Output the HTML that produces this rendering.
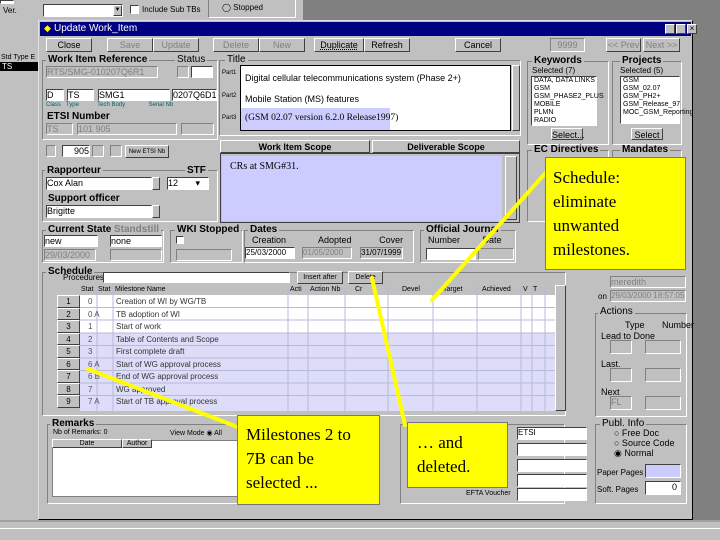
<!DOCTYPE html><html><head><style>
body{margin:0;width:720px;height:540px;overflow:hidden;background:#808080;position:relative;font-family:"Liberation Sans",sans-serif;font-size:9px;color:#000}
div,span{position:absolute;box-sizing:border-box}
.g{background:#c0c0c0}
.b{background:#c0c0c0;border:1px solid;border-color:#fff #404040 #404040 #fff;text-align:center;line-height:12px}
.i{background:#fff;border:1px solid;border-color:#404040 #fff #fff #404040}
.ig{background:#c0c0c0;border:1px solid;border-color:#808080 #fff #fff #808080}
.gr{border:1px solid;border-color:#808080 #fff #fff #808080}
.l{background:#c0c0c0;padding:0 2px;font-weight:bold;font-size:10px;line-height:10px}
.y{background:#ffff00;border:1px solid #777;font-family:"Liberation Serif",serif;font-size:17px;line-height:24px;padding:4px 8px}
.dis{color:#808080}
</style></head><body>
<div class="g" style="left:0;top:0;width:303px;height:22px"></div>
<div class="i" style="left:0;top:0;width:14px;height:4px"></div>
<span style="left:3px;top:6px;font-size:8px">Ver.</span>
<div class="i" style="left:43px;top:4px;width:80px;height:13px"></div>
<div class="b" style="left:113px;top:5px;width:9px;height:11px;font-size:6px;line-height:9px">▼</div>
<div class="i" style="left:130px;top:5px;width:9px;height:9px"></div>
<span style="left:142px;top:5px;font-size:8px">Include Sub TBs</span>
<div class="gr" style="left:208px;top:-2px;width:88px;height:20px"></div>
<span style="left:222px;top:3px;font-size:8px">◯ Stopped</span>
<div class="g" style="left:0;top:22px;width:40px;height:500px"></div>
<span style="left:1px;top:54px;font-size:7px">Std Type E</span>
<div style="left:0;top:62px;width:38px;height:9px;background:#000"></div>
<span style="left:2px;top:62px;color:#fff;font-size:8px">TS</span>
<div class="g" style="left:0;top:520px;width:720px;height:20px;border-top:2px solid #a0a0a0"></div>
<div style="left:0;top:528px;width:720px;height:1px;background:#fff"></div>
<!-- window -->
<div class="g" style="left:38px;top:20px;width:655px;height:500px;border:1px solid;border-color:#dfdfdf #000 #000 #dfdfdf"></div>
<div style="left:40px;top:22px;width:651px;height:14px;background:#000080"></div>
<span style="left:44px;top:23px;color:#ff0;font-size:9px">◆</span>
<span style="left:54px;top:23px;color:#fff;font-size:10px">Update Work_Item</span>
<div class="b" style="left:665px;top:24px;width:10px;height:10px"></div>
<div class="b" style="left:676px;top:24px;width:10px;height:10px"></div>
<div class="b" style="left:687px;top:24px;width:10px;height:10px;font-size:8px;line-height:8px">×</div>
<!-- toolbar -->
<div class="b" style="left:46px;top:38px;width:46px;height:14px">Close</div>
<div class="b dis" style="left:107px;top:38px;width:46px;height:14px">Save</div>
<div class="b dis" style="left:153px;top:38px;width:46px;height:14px">Update</div>
<div class="b dis" style="left:213px;top:38px;width:46px;height:14px">Delete</div>
<div class="b dis" style="left:259px;top:38px;width:46px;height:14px">New</div>
<div class="b" style="left:314px;top:38px;width:50px;height:14px;text-decoration:underline dotted">Duplicate</div>
<div class="b" style="left:364px;top:38px;width:46px;height:14px">Refresh</div>
<div class="b" style="left:455px;top:38px;width:46px;height:14px">Cancel</div>
<div class="ig dis" style="left:550px;top:38px;width:35px;height:14px;text-align:center;line-height:12px">9999</div>
<div class="b dis" style="left:606px;top:38px;width:35px;height:14px">&lt;&lt; Prev</div>
<div class="b dis" style="left:643px;top:38px;width:37px;height:14px">Next &gt;&gt;</div>
<!-- work item ref -->
<div class="gr" style="left:42px;top:60px;width:176px;height:80px"></div>
<span class="l" style="left:46px;top:55px">Work Item Reference</span>
<span class="l" style="left:175px;top:55px;font-weight:normal">Status</span>
<div class="ig" style="left:46px;top:66px;width:112px;height:12px;color:#808080">RTS/SMG-010207Q6R1</div>
<div class="ig" style="left:177px;top:66px;width:12px;height:12px"></div>
<div class="i" style="left:191px;top:66px;width:22px;height:12px"></div>
<div class="i" style="left:46px;top:89px;width:18px;height:12px">D</div>
<div class="i" style="left:67px;top:89px;width:27px;height:12px">TS</div>
<div class="i" style="left:98px;top:89px;width:72px;height:12px">SMG1</div>
<div class="i" style="left:172px;top:89px;width:45px;height:12px">0207Q6D1</div>
<span style="left:46px;top:102px;font-size:6px;color:#066">Class &nbsp; Type &nbsp;&nbsp;&nbsp;&nbsp;&nbsp;&nbsp;&nbsp;&nbsp;&nbsp; Tech Body &nbsp;&nbsp;&nbsp;&nbsp;&nbsp;&nbsp;&nbsp;&nbsp;&nbsp;&nbsp;&nbsp;&nbsp; Serial Nb</span>
<span class="l" style="left:45px;top:112px">ETSI Number</span>
<div class="ig" style="left:46px;top:123px;width:27px;height:12px;color:#808080">TS</div>
<div class="ig" style="left:77px;top:123px;width:100px;height:12px;color:#808080">101 905</div>
<div class="ig" style="left:181px;top:123px;width:33px;height:12px"></div>
<div class="ig" style="left:46px;top:145px;width:10px;height:12px"></div>
<div class="i" style="left:62px;top:145px;width:28px;height:12px;text-align:right">905</div>
<div class="ig" style="left:92px;top:145px;width:12px;height:12px"></div>
<div class="ig" style="left:110px;top:145px;width:12px;height:12px"></div>
<div class="b" style="left:125px;top:145px;width:44px;height:13px;font-size:6px">New ETSI Nb</div>
<div class="gr" style="left:42px;top:170px;width:176px;height:52px"></div>
<span class="l" style="left:45px;top:166px">Rapporteur</span>
<span class="l" style="left:185px;top:166px">STF</span>
<div class="i" style="left:46px;top:177px;width:106px;height:13px">Cox Alan</div>
<div class="b" style="left:152px;top:177px;width:8px;height:13px"></div>
<div class="i" style="left:167px;top:177px;width:42px;height:13px">12 &nbsp;&nbsp;&nbsp;&nbsp;&nbsp; ▾</div>
<span class="l" style="left:46px;top:194px">Support officer</span>
<div class="i" style="left:46px;top:205px;width:106px;height:13px">Brigitte</div>
<div class="b" style="left:152px;top:205px;width:8px;height:13px"></div>
<!-- title -->
<div class="gr" style="left:219px;top:60px;width:302px;height:76px"></div>
<span class="l" style="left:225px;top:55px;font-weight:normal">Title</span>
<span style="left:222px;top:70px;font-size:6px">Part1</span><span style="left:222px;top:93px;font-size:6px">Part2</span><span style="left:222px;top:115px;font-size:6px">Part3</span>
<div style="left:240px;top:65px;width:271px;height:66px;background:#fff;border:1px solid #000"></div>
<span style="left:245px;top:73px;font-size:9px">Digital cellular telecommunications system (Phase 2+)</span>
<span style="left:245px;top:94px;font-size:9px">Mobile Station (MS) features</span>
<div style="left:241px;top:108px;width:149px;height:22px;background:#ccccff"></div>
<span style="left:245px;top:113px;font-family:'Liberation Serif',serif;font-size:9.5px">(GSM 02.07 version 6.2.0 Release1997)</span>
<div class="b" style="left:512px;top:65px;width:8px;height:66px"></div>
<!-- tabs -->
<div class="b" style="left:220px;top:140px;width:150px;height:13px;font-weight:bold">Work Item Scope</div>
<div class="b" style="left:372px;top:140px;width:148px;height:13px;font-weight:bold">Deliverable Scope</div>
<div style="left:220px;top:153px;width:300px;height:70px;border:1px solid #404040;background:#c0c0c0"></div>
<div style="left:222px;top:156px;width:280px;height:65px;background:#ccccff"></div>
<span style="left:230px;top:161px;font-family:'Liberation Serif',serif;font-size:10px">CRs at SMG#31.</span>
<div class="b" style="left:505px;top:156px;width:12px;height:64px"></div>
<!-- keywords -->
<div class="gr" style="left:527px;top:61px;width:82px;height:84px"></div>
<span class="l" style="left:532px;top:56px">Keywords</span>
<span style="left:532px;top:66px;font-size:8px">Selected (7)</span>
<div class="i" style="left:531px;top:76px;width:66px;height:50px;font-size:7px;line-height:8px;padding-left:2px">DATA, DATA LINKS<br>GSM<br>GSM_PHASE2_PLUS<br>MOBILE<br>PLMN<br>RADIO</div>
<div class="b" style="left:551px;top:128px;width:32px;height:12px">Select...</div>
<div class="gr" style="left:612px;top:61px;width:70px;height:84px"></div>
<span class="l" style="left:620px;top:56px">Projects</span>
<span style="left:620px;top:66px;font-size:8px">Selected (5)</span>
<div class="i" style="left:620px;top:76px;width:60px;height:48px;font-size:7px;line-height:8px;padding-left:2px">GSM<br>GSM_02.07<br>GSM_PH2+<br>GSM_Release_97<br>MOC_GSM_Reporting</div>
<div class="b" style="left:631px;top:128px;width:32px;height:12px">Select</div>
<div class="gr" style="left:527px;top:150px;width:82px;height:72px"></div>
<span class="l" style="left:532px;top:145px">EC Directives</span>
<div class="gr" style="left:612px;top:150px;width:70px;height:72px"></div>
<span class="l" style="left:620px;top:145px">Mandates</span>
<!-- current state row -->
<div class="gr" style="left:42px;top:230px;width:122px;height:33px"></div>
<span class="l" style="left:46px;top:225px">Current State</span>
<span class="l" style="left:112px;top:225px;color:#808080">Standstill</span>
<div class="i" style="left:44px;top:235px;width:54px;height:12px">new</div>
<div class="ig" style="left:44px;top:249px;width:52px;height:12px;color:#808080">29/03/2000</div>
<div class="i" style="left:110px;top:235px;width:52px;height:12px">none</div>
<div class="ig" style="left:110px;top:249px;width:52px;height:12px"></div>
<div class="gr" style="left:170px;top:230px;width:73px;height:33px"></div>
<span class="l" style="left:175px;top:225px">WKI Stopped</span>
<div class="i" style="left:176px;top:236px;width:8px;height:8px"></div>
<div class="ig" style="left:176px;top:249px;width:56px;height:12px"></div>
<div class="gr" style="left:244px;top:230px;width:170px;height:33px"></div>
<span class="l" style="left:248px;top:225px">Dates</span>
<span style="left:252px;top:235px">Creation &nbsp;&nbsp;&nbsp;&nbsp;&nbsp;&nbsp;&nbsp;&nbsp;&nbsp;&nbsp;&nbsp; Adopted &nbsp;&nbsp;&nbsp;&nbsp;&nbsp;&nbsp;&nbsp;&nbsp;&nbsp; Cover</span>
<div class="i" style="left:245px;top:247px;width:50px;height:12px;font-size:8px">25/03/2000</div>
<div class="ig" style="left:302px;top:247px;width:50px;height:12px;font-size:8px;color:#808080">01/05/2000</div>
<div class="ig" style="left:360px;top:247px;width:43px;height:12px;font-size:8px">31/07/1999</div>
<div class="gr" style="left:420px;top:230px;width:96px;height:33px"></div>
<span class="l" style="left:424px;top:225px">Official Journal</span>
<span style="left:428px;top:235px">Number &nbsp;&nbsp;&nbsp;&nbsp;&nbsp;&nbsp;&nbsp; Date</span>
<div class="i" style="left:426px;top:248px;width:50px;height:12px"></div>
<div class="ig" style="left:478px;top:248px;width:36px;height:12px"></div>
<!-- schedule -->
<div class="gr" style="left:42px;top:272px;width:524px;height:144px"></div>
<span class="l" style="left:46px;top:267px">Schedule</span>
<span style="left:63px;top:273px;font-size:8px">Procedures</span>
<div class="i" style="left:103px;top:272px;width:187px;height:11px"></div>
<div class="b" style="left:297px;top:271px;width:46px;height:13px;font-size:7px">Insert after</div>
<div class="b" style="left:348px;top:271px;width:35px;height:13px;font-size:7px">Delete</div>
<div style="left:57px;top:285px;width:498px;height:10px;background:#c0c0c0;font-size:7px;line-height:10px;white-space:nowrap">
<span style="left:24px">Stat</span><span style="left:41px">Stat</span><span style="left:58px">Milestone Name</span><span style="left:233px">Acti</span><span style="left:253px">Action Nb</span><span style="left:298px">Cr</span><span style="left:345px">Devel</span><span style="left:386px">Target</span><span style="left:425px">Achieved</span><span style="left:466px">V</span><span style="left:476px">T</span></div>
<div style="left:80px;top:295px;width:475px;height:38px;background:#fff"></div>
<div style="left:80px;top:333px;width:475px;height:78px;background:#ddddfa"></div>
<svg style="position:absolute;left:0;top:0" width="720" height="540">
<g stroke="#b8b8d8" stroke-width="1">
<line x1="80" y1="307.5" x2="555" y2="307.5"/><line x1="80" y1="320" x2="555" y2="320"/><line x1="80" y1="333" x2="555" y2="333"/><line x1="80" y1="345.5" x2="555" y2="345.5"/><line x1="80" y1="358" x2="555" y2="358"/><line x1="80" y1="370.5" x2="555" y2="370.5"/><line x1="80" y1="383" x2="555" y2="383"/><line x1="80" y1="395.5" x2="555" y2="395.5"/>
<line x1="97" y1="285" x2="97" y2="411"/><line x1="113" y1="285" x2="113" y2="411"/><line x1="288" y1="285" x2="288" y2="411"/><line x1="308" y1="285" x2="308" y2="411"/><line x1="345" y1="285" x2="345" y2="411"/><line x1="388" y1="285" x2="388" y2="411"/><line x1="433" y1="285" x2="433" y2="411"/><line x1="477" y1="285" x2="477" y2="411"/><line x1="521" y1="285" x2="521" y2="411"/><line x1="532" y1="285" x2="532" y2="411"/><line x1="545" y1="285" x2="545" y2="411"/>
</g></svg>
<div style="left:57px;top:295px;width:23px;height:116px;font-size:8px;text-align:center;line-height:12.5px">
<div class="b" style="position:static;height:12.5px;line-height:11px">1</div><div class="b" style="position:static;height:12.5px;line-height:11px">2</div><div class="b" style="position:static;height:12.5px;line-height:11px">3</div><div class="b" style="position:static;height:12.5px;line-height:11px">4</div><div class="b" style="position:static;height:12.5px;line-height:11px">5</div><div class="b" style="position:static;height:12.5px;line-height:11px">6</div><div class="b" style="position:static;height:12.5px;line-height:11px">7</div><div class="b" style="position:static;height:12.5px;line-height:11px">8</div><div class="b" style="position:static;height:12.5px;line-height:11px">9</div></div>
<div style="left:88px;top:296px;width:30px;font-size:8px;line-height:12.5px;color:#555">0<br>0 A<br>1<br>2<br>3<br>6 A<br>6 B<br>7<br>7 A</div>
<div style="left:116px;top:296px;width:180px;font-size:8px;line-height:12.5px;color:#333;white-space:nowrap">Creation of WI by WG/TB<br>TB adoption of WI<br>Start of work<br>Table of Contents and Scope<br>First complete draft<br>Start of WG approval process<br>End of WG approval process<br>WG approved<br>Start of TB approval process</div>
<div class="b" style="left:555px;top:285px;width:11px;height:126px"></div>
<!-- right panel -->
<div class="ig" style="left:610px;top:276px;width:76px;height:12px;color:#808080">meredith</div>
<span style="left:598px;top:292px;font-size:8px">on</span>
<div class="ig" style="left:610px;top:290px;width:76px;height:12px;color:#808080;font-size:8px">29/03/2000 18:57:05</div>
<div class="gr" style="left:595px;top:313px;width:92px;height:104px"></div>
<span class="l" style="left:598px;top:307px;font-weight:normal">Actions</span>
<span style="left:625px;top:320px">Type &nbsp;&nbsp;&nbsp;&nbsp;&nbsp; Number</span>
<span style="left:601px;top:331px">Lead to Done</span>
<div class="ig" style="left:610px;top:340px;width:22px;height:14px"></div><div class="ig" style="left:645px;top:340px;width:36px;height:14px"></div>
<span style="left:601px;top:359px">Last.</span>
<div class="ig" style="left:610px;top:368px;width:22px;height:14px"></div><div class="ig" style="left:645px;top:368px;width:36px;height:14px"></div>
<span style="left:601px;top:387px">Next</span>
<div class="ig" style="left:610px;top:396px;width:22px;height:14px;color:#808080">FL</div><div class="ig" style="left:645px;top:396px;width:36px;height:14px"></div>
<div class="gr" style="left:595px;top:424px;width:92px;height:80px"></div>
<span class="l" style="left:600px;top:419px;font-weight:normal">Publ. Info</span>
<span style="left:614px;top:428px;font-size:9px">○ Free Doc<br>○ Source Code<br>◉ Normal</span>
<span style="left:597px;top:468px;font-size:8px">Paper Pages</span>
<div class="i" style="left:645px;top:464px;width:36px;height:14px;background:#ccccff"></div>
<span style="left:597px;top:485px;font-size:8px">Soft. Pages</span>
<div class="i" style="left:645px;top:481px;width:36px;height:14px;text-align:right;padding-right:3px">0</div>
<!-- remarks -->
<div class="gr" style="left:47px;top:424px;width:250px;height:80px"></div>
<span class="l" style="left:50px;top:419px">Remarks</span>
<span style="left:53px;top:429px;font-size:7px">Nb of Remarks: 0</span>
<span style="left:170px;top:429px;font-size:7px">View Mode ◉ All</span>
<div style="left:52px;top:440px;width:190px;height:57px;background:#fff;border:1px solid #808080"></div>
<div class="b" style="left:52px;top:439px;width:70px;height:9px;font-size:7px;line-height:7px">Date</div>
<div class="b" style="left:122px;top:439px;width:30px;height:9px;font-size:7px;line-height:7px">Author</div>
<div class="gr" style="left:400px;top:424px;width:165px;height:80px"></div>
<div class="i" style="left:517px;top:427px;width:70px;height:13px;font-size:8px">ETSI</div>
<div class="i" style="left:517px;top:443px;width:70px;height:13px"></div>
<div class="i" style="left:517px;top:459px;width:70px;height:13px"></div>
<div class="i" style="left:517px;top:474px;width:70px;height:13px"></div>
<div class="i" style="left:517px;top:488px;width:70px;height:13px"></div>
<span style="left:466px;top:490px;font-size:7px">EFTA Voucher</span>
<!-- callouts -->
<svg style="position:absolute;left:0;top:0" width="720" height="540"><g stroke="#ffff00" stroke-width="4" stroke-linecap="round">
<line x1="550" y1="168" x2="432" y2="300"/><line x1="88" y1="369" x2="240" y2="428"/><line x1="372" y1="278" x2="405" y2="425"/></g></svg>
<div class="y" style="left:545px;top:157px;width:141px;height:113px;padding-left:7px;padding-top:8px">Schedule:<br>eliminate<br>unwanted<br>milestones.</div>
<div class="y" style="left:237px;top:415px;width:143px;height:90px;padding-top:7px">Milestones 2 to<br>7B can be<br>selected ...</div>
<div class="y" style="left:407px;top:422px;width:101px;height:66px;padding-left:9px;padding-top:8px">… and<br>deleted.</div>
</body></html>
